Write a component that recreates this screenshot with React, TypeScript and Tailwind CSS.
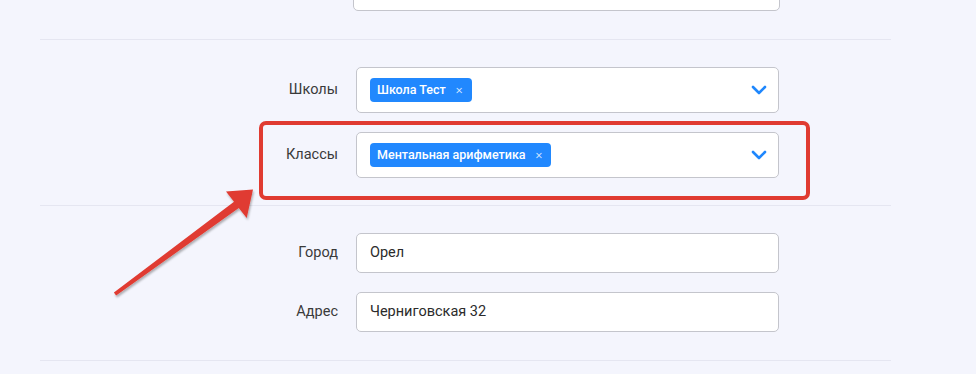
import React from 'react';

type Row = { label: string; kind: 'input' | 'select'; value?: string; chips?: string[] };

const Chevron = () => (
  <svg width="16" height="10" viewBox="0 0 16 10" fill="none">
    <path d="M2 2l6 6 6-6" stroke="#1f87fd" strokeWidth="2.6" strokeLinecap="round" strokeLinejoin="round" />
  </svg>
);

function Chip({ text }: { text: string }) {
  return (
    <span className="inline-flex items-center h-[24px] pl-[7px] pr-[9px] rounded-[4px] bg-[#2188fe] text-white text-[12.5px] font-medium">
      {text}
      <span className="ml-[10px] text-[13px] font-light text-white/90">×</span>
    </span>
  );
}

function FieldRow({ row }: { row: Row }) {
  return (
    <div className="flex items-center">
      <label className="w-[316px] pr-[18px] text-right text-[14.5px] text-[#3a3a3a]">{row.label}</label>
      {row.kind === 'input' ? (
        <div className="w-[423px] h-[40px] flex items-center px-[13px] bg-white border border-[#c4c5cc] rounded-[5px] text-[14.5px] text-[#2b2b2b]">
          {row.value}
        </div>
      ) : (
        <div className="w-[423px] h-[46px] flex items-center justify-between pl-[13px] pr-[11px] bg-white border border-[#c4c5cc] rounded-[5px]">
          <div className="flex gap-1">
            {row.chips?.map((c) => (
              <Chip key={c} text={c} />
            ))}
          </div>
          <Chevron />
        </div>
      )}
    </div>
  );
}

const SECTION_A: Row[] = [
  { label: 'Школы', kind: 'select', chips: ['Школа Тест'] },
  { label: 'Классы', kind: 'select', chips: ['Ментальная арифметика'] },
];

const SECTION_B: Row[] = [
  { label: 'Город', kind: 'input', value: 'Орел' },
  { label: 'Адрес', kind: 'input', value: 'Черниговская 32' },
];

export default function App() {
  return (
    <div className="relative h-[374px] w-[976px] overflow-hidden bg-[#f4f5fd] font-['Roboto',sans-serif]">
      <div className="ml-[40px] w-[851px] -mt-[29px]">
        {/* previous field, cut off at the top */}
        <section className="pb-[28px] border-b border-[#e5e6f1]">
          <div className="flex">
            <div className="w-[313px]" />
            <div className="w-[427px] h-[40px] bg-white border border-[#c4c5cc] rounded-[5px]" />
          </div>
        </section>

        <section className="pt-[27px] pb-[27px] border-b border-[#e5e6f1] flex flex-col gap-[19px]">
          {SECTION_A.map((r) => (
            <FieldRow key={r.label} row={r} />
          ))}
        </section>

        <section className="pt-[27px] pb-[28px] border-b border-[#e5e6f1] flex flex-col gap-[19px]">
          {SECTION_B.map((r) => (
            <FieldRow key={r.label} row={r} />
          ))}
        </section>
      </div>

      {/* annotation: highlight box */}
      <div className="absolute left-[259px] top-[121px] w-[551px] h-[79px] border-[4px] border-[#e03b31] rounded-[7px] pointer-events-none" />

      {/* annotation: arrow */}
      <svg className="absolute left-0 top-0 pointer-events-none" width="976" height="374">
        <defs>
          <filter id="sh" x="-20%" y="-20%" width="140%" height="140%">
            <feDropShadow dx="1" dy="2" stdDeviation="1.2" floodColor="#000" floodOpacity="0.3" />
          </filter>
        </defs>
        <polygon
          points="113.9,292.6 234,201.7 226,191.5 253,189.5 246.7,218 238.8,208.1 116.1,295.4"
          fill="#e03b31"
          filter="url(#sh)"
        />
      </svg>
    </div>
  );
}
